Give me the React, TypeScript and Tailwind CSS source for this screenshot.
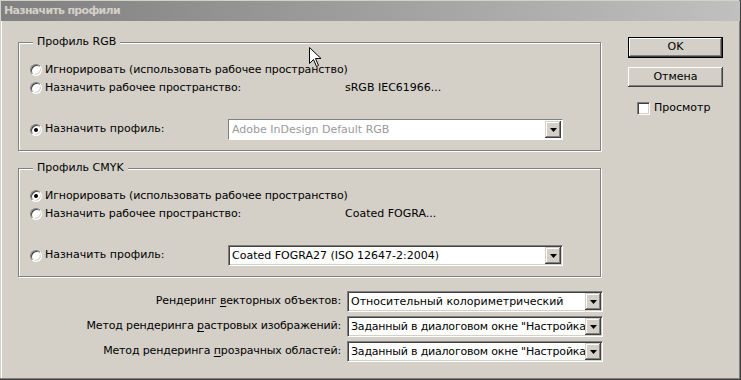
import React from "react";

const FONT = { fontFamily: '"DejaVu Sans", Verdana, sans-serif' };

function Radio({ checked }: { checked?: boolean }) {
  return (
    <div className="relative h-[12px] w-[12px] shrink-0 rounded-full border border-t-[#808080] border-l-[#808080] border-b-white border-r-white bg-white shadow-[inset_1px_1px_0_#404040,inset_-1px_-1px_0_#d4d0c8]">
      {checked && <div className="absolute left-[3px] top-[3px] h-[4px] w-[4px] rounded-full bg-black" />}
    </div>
  );
}

function Arrow() {
  return (
    <div className="flex h-[17px] w-[16px] shrink-0 items-center justify-center bg-[#d4d0c8] shadow-[inset_-1px_-1px_0_#404040,inset_1px_1px_0_#d4d0c8,inset_-2px_-2px_0_#808080,inset_2px_2px_0_#ffffff]">
      <svg width="7" height="4" viewBox="0 0 7 4">
        <path d="M0 0h7L3.5 4z" fill="#000" />
      </svg>
    </div>
  );
}

function Dropdown({ text, disabled, w, tight }: { text: string; disabled?: boolean; w: string; tight?: boolean }) {
  return (
    <div
      className={`${w} flex h-[21px] shrink-0 items-center border border-t-[#808080] border-l-[#808080] border-b-white border-r-white bg-white p-[1px] ${
        disabled ? "" : "shadow-[inset_1px_1px_0_#404040,inset_-1px_-1px_0_#d4d0c8]"
      }`}
    >
      <div
        className={`min-w-0 flex-1 overflow-hidden whitespace-nowrap pl-[2px] text-[11px] leading-[17px] ${disabled ? "text-[#9a9a9a]" : "text-black"} ${
          tight ? "tracking-[-0.2px]" : ""
        }`}
      >
        {text}
      </div>
      <Arrow />
    </div>
  );
}

function Group({ title, children, className = "" }: { title: string; children: React.ReactNode; className?: string }) {
  return (
    <div className={`relative h-[109px] w-[583px] border border-[#808080] pt-[18px] pl-[11px] shadow-[1px_1px_0_#ffffff,inset_1px_1px_0_#ffffff] ${className}`}>
      <div className="absolute left-[14px] top-[-8px] bg-[#d4d0c8] px-[4px] text-[11px] leading-[14px]">{title}</div>
      {children}
    </div>
  );
}

function RadioRow({ checked, label, labelW, children }: { checked?: boolean; label: string; labelW?: string; children?: React.ReactNode }) {
  return (
    <div className="flex h-[18px] items-center">
      <Radio checked={checked} />
      <span className={`ml-[3px] whitespace-nowrap text-[11px] tracking-[-0.1px] ${labelW ?? ""}`}>{label}</span>
      {children}
    </div>
  );
}

function ProfileGroup({
  title,
  first,
  space,
  profile,
  profileDisabled,
  checkedIndex,
  className,
}: {
  title: string;
  first: string;
  space: string;
  profile: string;
  profileDisabled?: boolean;
  checkedIndex: number;
  className?: string;
}) {
  return (
    <Group title={title} className={className}>
      <RadioRow checked={checkedIndex === 0} label={first} />
      <RadioRow checked={checkedIndex === 1} label="Назначить рабочее пространство:" labelW="w-[300px]">
        <span className="whitespace-nowrap text-[11px]">{space}</span>
      </RadioRow>
      <div className="mt-[22px] flex h-[21px] items-center">
        <Radio checked={checkedIndex === 2} />
        <span className="ml-[3px] w-[183px] whitespace-nowrap text-[11px]">Назначить профиль:</span>
        <Dropdown text={profile} disabled={profileDisabled} w="w-[335px]" />
      </div>
    </Group>
  );
}

function RenderRow({ pre, u, post, value, tight }: { pre: string; u: string; post: string; value: string; tight?: boolean }) {
  return (
    <div className="flex h-[21px] items-center">
      <div className="w-[323px] whitespace-nowrap text-right text-[11px] tracking-[-0.15px]">
        {pre}
        <span className="underline underline-offset-2">{u}</span>
        {post}
      </div>
      <div className="ml-[6px]">
        <Dropdown text={value} w="w-[256px]" tight={tight} />
      </div>
    </div>
  );
}

export default function App() {
  return (
    <div
      style={FONT}
      className="relative h-[380px] w-[741px] overflow-hidden bg-[#d4d0c8] text-black shadow-[inset_-1px_-1px_0_#404040,inset_-2px_-2px_0_#808080,inset_1px_1px_0_#d4d0c8,inset_2px_2px_0_#ffffff]"
    >
      <div className="mx-[1px] mt-[1px] flex h-[20px] items-center bg-gradient-to-r from-[#808080] to-[#c0c0c0] pl-[3px] text-[11px] font-bold tracking-[-0.7px] text-[#d4d0c8]">
        Назначить профили
      </div>

      <div className="flex pl-[18px]">
        <div className="w-[585px] pt-[21px]">
          <ProfileGroup
            title="Профиль RGB"
            first="Игнорировать (использовать рабочее пространство)"
            space="sRGB IEC61966..."
            profile="Adobe InDesign Default RGB"
            profileDisabled
            checkedIndex={2}
          />
          <ProfileGroup
            title="Профиль CMYK"
            first="Игнорировать (использовать рабочее пространство)"
            space="Coated FOGRA..."
            profile="Coated FOGRA27 (ISO 12647-2:2004)"
            checkedIndex={0}
            className="mt-[17px]"
          />
          <div className="mt-[14px] flex flex-col gap-[4px]">
            <RenderRow pre="Рендеринг " u="в" post="екторных объектов:" value="Относительный колориметрический" />
            <RenderRow pre="Метод рендеринга " u="р" post="астровых изображений:" value={'Заданный в диалоговом окне "Настройка'} tight />
            <RenderRow pre="Метод рендеринга " u="п" post="розрачных областей:" value={'Заданный в диалоговом окне "Настройка'} tight />
          </div>
        </div>

        <div className="ml-[25px] flex flex-col pt-[16px]">
          <div className="h-[21px] w-[95px] border border-black">
            <div className="flex h-full w-full items-center justify-center text-[11px] shadow-[inset_-1px_-1px_0_#404040,inset_1px_1px_0_#ffffff,inset_-2px_-2px_0_#808080]">
              OK
            </div>
          </div>
          <div className="mt-[9px] flex h-[20px] w-[95px] items-center justify-center text-[11px] shadow-[inset_-1px_-1px_0_#404040,inset_1px_1px_0_#ffffff,inset_-2px_-2px_0_#808080]">
            Отмена
          </div>
          <div className="mt-[13px] flex items-center pl-[9px]">
            <div className="h-[13px] w-[13px] border border-t-[#808080] border-l-[#808080] border-b-white border-r-white bg-white shadow-[inset_1px_1px_0_#404040,inset_-1px_-1px_0_#d4d0c8]" />
            <span className="ml-[4px] text-[11px]">Просмотр</span>
          </div>
        </div>
      </div>

      <svg className="absolute left-[309px] top-[47px]" width="13" height="20" viewBox="0 0 13 20">
        <path d="M0.5 0.5v16l4-4 3 7 2-1-3-7h5.5z" fill="#fff" stroke="#000" strokeWidth="1" />
      </svg>
    </div>
  );
}
